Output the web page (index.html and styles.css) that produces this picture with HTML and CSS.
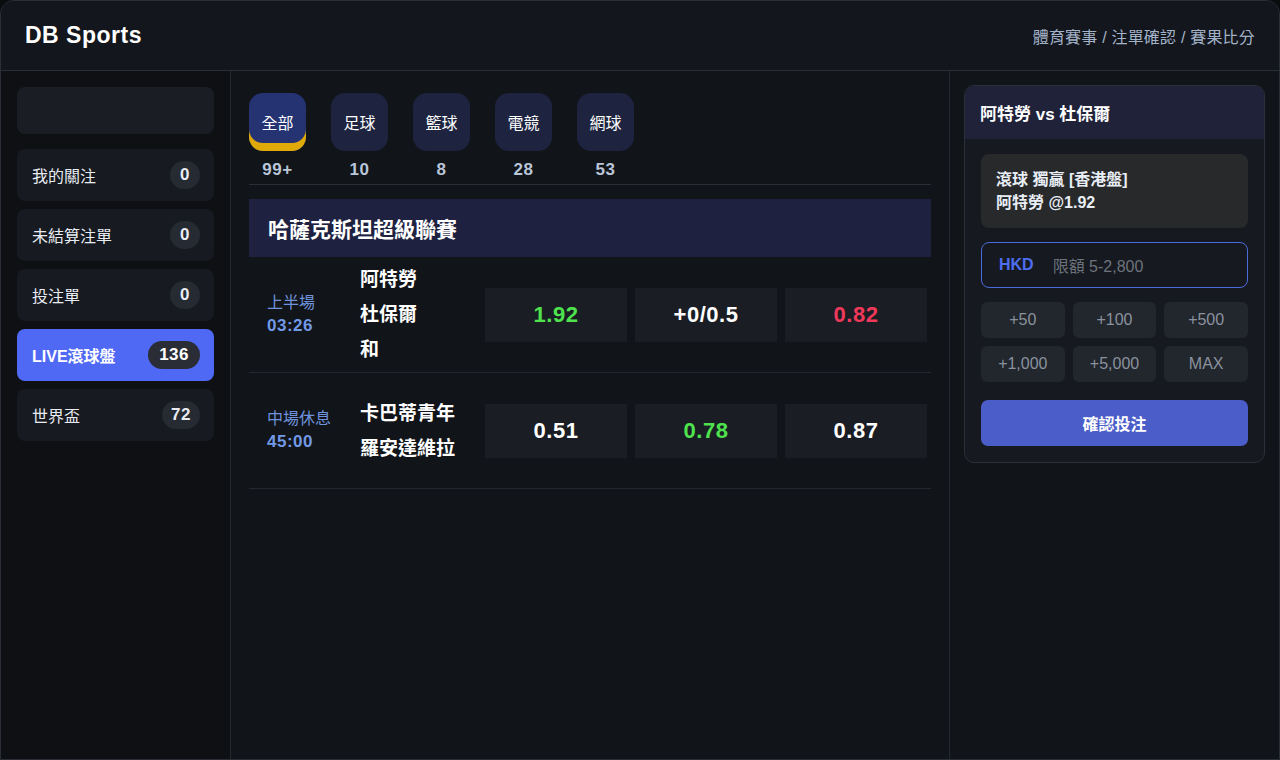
FILE: index.html
```html
<!DOCTYPE html>
<html lang="zh-Hant">
<head>
  <meta charset="UTF-8" />
  <title>DB Sports</title>
  <link rel="stylesheet" href="styles.css">
</head>
<body>
<div class="frame">
  <header class="topbar">
    <div class="brand">DB Sports</div>
    <nav class="crumbs">體育賽事 / 注單確認 / 賽果比分</nav>
  </header>

  <div class="layout">
    <aside class="sidebar">
      <div class="search"></div>
      <div class="menu-item"><span>我的關注</span><span class="badge">0</span></div>
      <div class="menu-item"><span>未結算注單</span><span class="badge">0</span></div>
      <div class="menu-item"><span>投注單</span><span class="badge">0</span></div>
      <div class="menu-item active"><span>LIVE滾球盤</span><span class="badge">136</span></div>
      <div class="menu-item"><span>世界盃</span><span class="badge">72</span></div>
    </aside>

    <main class="center">
      <div class="tabs">
        <div class="tab active"><div class="tab-box">全部</div><div class="tab-count">99+</div></div>
        <div class="tab"><div class="tab-box">足球</div><div class="tab-count">10</div></div>
        <div class="tab"><div class="tab-box">籃球</div><div class="tab-count">8</div></div>
        <div class="tab"><div class="tab-box">電競</div><div class="tab-count">28</div></div>
        <div class="tab"><div class="tab-box">網球</div><div class="tab-count">53</div></div>
      </div>

      <div class="league">哈薩克斯坦超級聯賽</div>

      <div class="match">
        <div class="time"><div class="period">上半場</div><div class="clock">03:26</div></div>
        <div class="teams"><div>阿特勞</div><div>杜保爾</div><div>和</div></div>
        <div class="odds">
          <div class="odd green">1.92</div>
          <div class="odd">+0/0.5</div>
          <div class="odd red">0.82</div>
        </div>
      </div>

      <div class="match">
        <div class="time"><div class="period">中場休息</div><div class="clock">45:00</div></div>
        <div class="teams"><div>卡巴蒂青年</div><div>羅安達維拉</div></div>
        <div class="odds">
          <div class="odd">0.51</div>
          <div class="odd green">0.78</div>
          <div class="odd">0.87</div>
        </div>
      </div>
    </main>

    <aside class="betslip">
      <div class="slip-card">
        <div class="slip-head">阿特勞 vs 杜保爾</div>
        <div class="slip-body">
          <div class="selection">
            <div>滾球 獨贏 [香港盤]</div>
            <div>阿特勞 @1.92</div>
          </div>
          <div class="stake">
            <span class="currency">HKD</span>
            <span class="limit">限額 5-2,800</span>
          </div>
          <div class="chips">
            <div class="chip">+50</div>
            <div class="chip">+100</div>
            <div class="chip">+500</div>
            <div class="chip">+1,000</div>
            <div class="chip">+5,000</div>
            <div class="chip">MAX</div>
          </div>
          <button type="button" class="confirm">確認投注</button>
        </div>
      </div>
    </aside>
  </div>
</div>
</body>
</html>
```

FILE: styles.css
```css
* {
  box-sizing: border-box;
}

body {
  margin: 0;
  background-color: #0b0d10;
  font-family: 'Liberation Sans', 'Noto Sans CJK TC', sans-serif;
  color: #fff;
}

.frame {
  width: 1280px;
  height: 760px;
  border: 1px solid #2a2e36;
  border-radius: 14px 14px 0 0;
  background-color: #121519;
  overflow: hidden;
  display: flex;
  flex-direction: column;
}

.topbar {
  height: 70px;
  flex-shrink: 0;
  display: flex;
  align-items: center;
  justify-content: space-between;
  padding: 0 24px;
  background-color: #13161c;
  border-bottom: 1px solid #2a2e36;
}

.brand {
  font-size: 23px;
  font-weight: bold;
  letter-spacing: 0.5px;
}

.crumbs {
  font-size: 16px;
  color: #a3b3c9;
  letter-spacing: 0.2px;
}

.layout {
  flex: 1;
  display: flex;
}

/* left menu */
.sidebar {
  width: 230px;
  flex-shrink: 0;
  padding: 16px 16px;
  background-color: #0e1014;
  border-right: 1px solid #23272e;
  display: flex;
  flex-direction: column;
  gap: 8px;
}

.search {
  height: 47px;
  border-radius: 8px;
  background-color: #1a1d23;
  margin-bottom: 7px;
}

.menu-item {
  height: 52px;
  border-radius: 8px;
  background-color: #171a20;
  display: flex;
  align-items: center;
  justify-content: space-between;
  padding: 0 14px 0 15px;
  font-size: 16px;
  color: #e8ecf2;
}

.badge {
  min-width: 30px;
  height: 28px;
  padding: 0 9px;
  border-radius: 14px;
  background-color: #262a32;
  display: flex;
  align-items: center;
  justify-content: center;
  font-weight: bold;
  font-size: 17px;
  letter-spacing: 0.5px;
}

.menu-item.active {
  background-color: #5069f4;
  font-weight: bold;
  color: #fff;
}

.menu-item.active .badge {
  background-color: #2a2d36;
  padding: 0 11px;
}

/* center column */
.center {
  width: 719px;
  flex-shrink: 0;
  padding: 22px 18px 0 18px;
  border-right: 1px solid #23272e;
  background-color: #111418;
}

.tabs {
  display: flex;
  gap: 25px;
  padding-bottom: 4px;
  border-bottom: 1px solid #2a2e36;
}

.tab {
  width: 57px;
  display: flex;
  flex-direction: column;
  align-items: center;
}

.tab-box {
  width: 57px;
  height: 58px;
  border-radius: 14px;
  background-color: #1e2440;
  display: flex;
  align-items: center;
  justify-content: center;
  font-size: 16px;
}

.tab.active .tab-box {
  background-color: #253372;
  box-shadow: inset 0 -8px 0 #e0a90a;
  padding-bottom: 1px;
}

.tab-count {
  margin-top: 9px;
  font-size: 17px;
  font-weight: bold;
  letter-spacing: 0.5px;
  color: #b9c5d9;
  line-height: 20px;
}

.league {
  margin-top: 14px;
  height: 58px;
  background-color: #1e2240;
  display: flex;
  align-items: center;
  padding-left: 19px;
  font-size: 21px;
  font-weight: bold;
}

.match {
  height: 116px;
  display: flex;
  align-items: center;
  padding: 0 3px 0 18px;
  border-bottom: 1px solid #23272e;
}

.time {
  width: 93px;
  flex-shrink: 0;
}

.period {
  font-size: 16px;
  color: #6e93dc;
  line-height: 23px;
}

.clock {
  font-size: 17px;
  font-weight: bold;
  letter-spacing: 0.5px;
  color: #7199e6;
  line-height: 24px;
}

.teams {
  width: 125px;
  flex-shrink: 0;
  font-size: 19px;
  font-weight: bold;
  line-height: 35px;
}

.odds {
  flex: 1;
  display: flex;
  gap: 8px;
}

.odd {
  width: 142px;
  height: 54px;
  background-color: #1a1d23;
  display: flex;
  align-items: center;
  justify-content: center;
  font-size: 22px;
  font-weight: bold;
  letter-spacing: 0.5px;
}

.odd.green {
  color: #4ee34e;
}

.odd.red {
  color: #f0395a;
}

/* bet slip */
.betslip {
  flex: 1;
  padding: 14px 14px;
  background-color: #111418;
}

.slip-card {
  border: 1px solid #2b2f39;
  border-radius: 10px;
  overflow: hidden;
  background-color: #16191f;
}

.slip-head {
  height: 53px;
  background-color: #1f2239;
  display: flex;
  align-items: center;
  padding-left: 15px;
  font-size: 17px;
  font-weight: bold;
}

.slip-body {
  padding: 15px 16px 16px 16px;
}

.selection {
  background-color: #28292b;
  border-radius: 8px;
  padding: 14px 15px;
  font-size: 16px;
  font-weight: bold;
  line-height: 23px;
  color: #e9eef6;
}

.stake {
  margin-top: 14px;
  height: 46px;
  border: 1px solid #4b6bd8;
  border-radius: 8px;
  display: flex;
  align-items: center;
  padding: 0 17px;
  gap: 19px;
}

.currency {
  color: #4d6ef0;
  font-weight: bold;
  font-size: 16px;
}

.limit {
  color: #6d737d;
  font-size: 16px;
}

.chips {
  margin-top: 14px;
  display: grid;
  grid-template-columns: repeat(3, 1fr);
  gap: 8px;
}

.chip {
  height: 36px;
  border-radius: 6px;
  background-color: #22262d;
  color: #8a929e;
  font-size: 16px;
  display: flex;
  align-items: center;
  justify-content: center;
}

.confirm {
  margin-top: 18px;
  width: 100%;
  height: 46px;
  border: none;
  border-radius: 7px;
  background-color: #4a5dc8;
  color: #fff;
  font-family: inherit;
  font-size: 16px;
  font-weight: bold;
  cursor: pointer;
}
```
